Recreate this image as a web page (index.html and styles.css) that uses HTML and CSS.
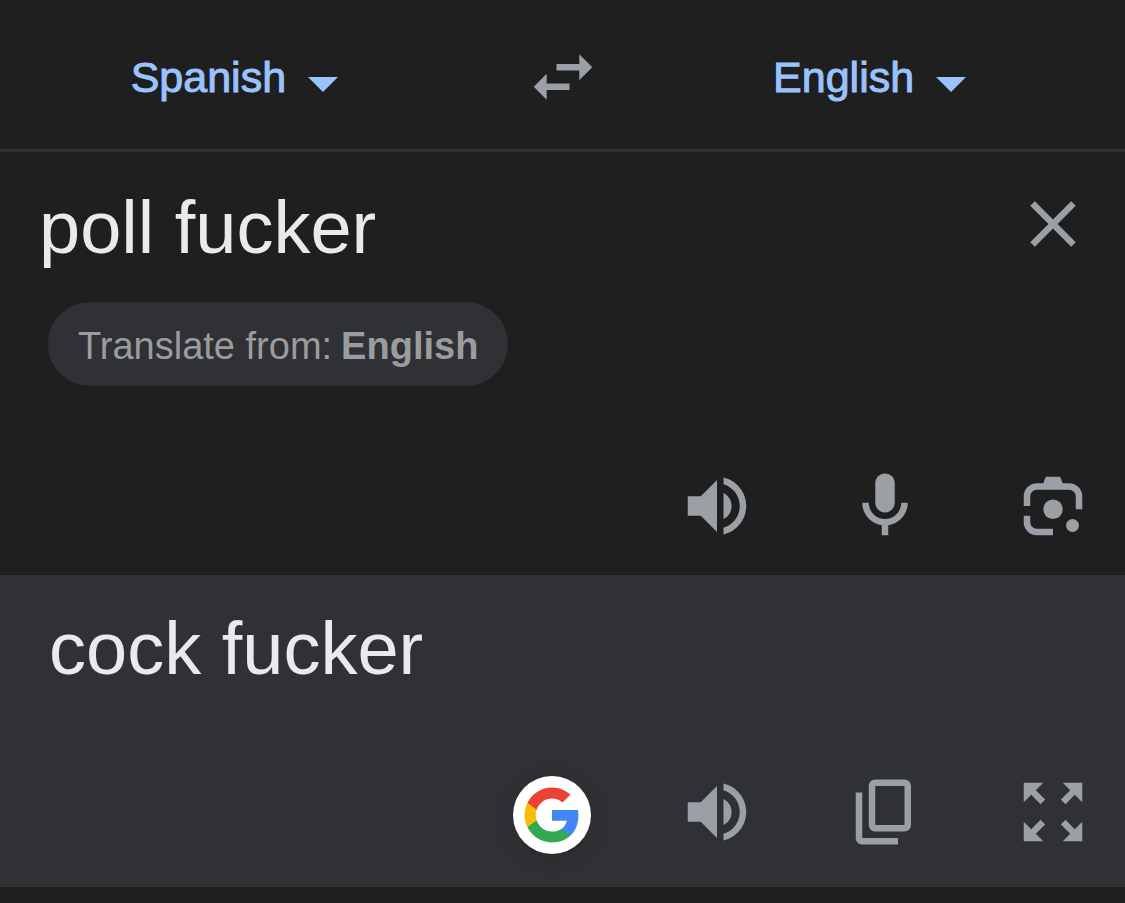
FILE: index.html
```html
<!DOCTYPE html>
<html lang="en">
<head>
    <meta charset="UTF-8">
    <meta name="viewport" content="width=device-width, initial-scale=1">
    <title>Translate</title>
    <link rel="stylesheet" href="styles.css">
</head>
<body>
    <header class="languages">
        <button class="language" type="button">
            Spanish
            <svg class="caret" viewBox="0 0 30 30" aria-hidden="true"><path d="M0 15h30L15 30z"/></svg>
        </button>
        <button class="icon-button" type="button" aria-label="Swap languages">
            <svg class="icon" viewBox="0 0 24 24"><path d="M6.99 11L3 15l3.99 4v-3H14v-2H6.99v-3zM21 9l-3.99-4v3H10v2h7.01v3L21 9z"/></svg>
        </button>
        <button class="language language-target" type="button">
            English
            <svg class="caret" viewBox="0 0 30 30" aria-hidden="true"><path d="M0 15h30L15 30z"/></svg>
        </button>
    </header>

    <main>
        <section class="source">
            <div class="source-row">
                <textarea class="source-text" rows="1" aria-label="Source text" spellcheck="false">poll fucker</textarea>
                <button class="icon-button" type="button" aria-label="Clear text">
                    <svg class="icon" viewBox="0 0 24 24"><path d="M19 6.41L17.59 5 12 10.59 6.41 5 5 6.41 10.59 12 5 17.59 6.41 19 12 13.41 17.59 19 19 17.59 13.41 12z"/></svg>
                </button>
            </div>
            <button class="suggestion" type="button"><span>Translate from:</span><strong>English</strong></button>
            <div class="tools">
                <button class="icon-button" type="button" aria-label="Listen">
                    <svg class="icon" viewBox="0 0 24 24"><path d="M3 9v6h4l5 5V4L7 9H3zm13.5 3c0-1.77-1-3.29-2.5-4.03v8.05c1.5-.73 2.5-2.25 2.5-4.02zM14 3.23v2.06c2.89.86 5 3.54 5 6.71s-2.11 5.85-5 6.71v2.06c4.01-.91 7-4.49 7-8.77s-2.99-7.86-7-8.77z"/></svg>
                </button>
                <button class="icon-button" type="button" aria-label="Speak">
                    <svg class="icon" viewBox="0 0 24 24"><path d="M12 14c1.66 0 3-1.34 3-3V5c0-1.66-1.34-3-3-3S9 3.34 9 5v6c0 1.66 1.34 3 3 3z"/><path d="M17 11c0 2.76-2.24 5-5 5s-5-2.24-5-5H5c0 3.53 2.61 6.43 6 6.92V21h2v-3.08c3.39-.49 6-3.39 6-6.92h-2z"/></svg>
                </button>
                <button class="icon-button" type="button" aria-label="Search with camera">
                    <svg class="icon" viewBox="0 0 24 24">
                        <path d="M3 12V9a4 4 0 0 1 4-4h2l.8-2h4.4l.8 2h2a4 4 0 0 1 4 4v4h-2V9a2 2 0 0 0-2-2H7a2 2 0 0 0-2 2v3zM3 15h2v2a2 2 0 0 0 2 2h5v2H7a4 4 0 0 1-4-4z"/>
                        <circle cx="12" cy="13" r="3"/>
                        <circle cx="18" cy="18" r="2"/>
                    </svg>
                </button>
            </div>
        </section>

        <section class="result">
            <p class="result-text">cock fucker</p>
            <div class="tools">
                <a class="google" href="#" aria-label="Search on Google">
                    <svg class="google-logo" viewBox="0 0 24 24">
                        <path fill="#4285f4" d="M22.56 12.25c0-.78-.07-1.53-.2-2.25H12v4.26h5.92c-.26 1.37-1.04 2.53-2.21 3.31v2.77h3.57c2.08-1.92 3.28-4.74 3.28-8.09z"/>
                        <path fill="#34a853" d="M12 23c2.97 0 5.46-.98 7.28-2.66l-3.57-2.77c-.98.66-2.23 1.06-3.71 1.06-2.86 0-5.29-1.93-6.16-4.53H2.18v2.84C3.99 20.53 7.7 23 12 23z"/>
                        <path fill="#fbbc05" d="M5.84 14.09c-.22-.66-.35-1.36-.35-2.09s.13-1.43.35-2.09V7.07H2.18C1.43 8.55 1 10.22 1 12s.43 3.45 1.18 4.93l2.85-2.22.81-.62z"/>
                        <path fill="#ea4335" d="M12 5.38c1.62 0 3.06.56 4.21 1.64l3.15-3.15C17.45 2.09 14.97 1 12 1 7.7 1 3.99 3.47 2.18 7.07l3.66 2.84c.87-2.6 3.3-4.53 6.16-4.53z"/>
                    </svg>
                </a>
                <button class="icon-button" type="button" aria-label="Listen to translation">
                    <svg class="icon" viewBox="0 0 24 24"><path d="M3 9v6h4l5 5V4L7 9H3zm13.5 3c0-1.77-1-3.29-2.5-4.03v8.05c1.5-.73 2.5-2.25 2.5-4.02zM14 3.23v2.06c2.89.86 5 3.54 5 6.71s-2.11 5.85-5 6.71v2.06c4.01-.91 7-4.49 7-8.77s-2.99-7.86-7-8.77z"/></svg>
                </button>
                <button class="icon-button" type="button" aria-label="Copy translation">
                    <svg class="icon" viewBox="0 0 24 24"><path d="M18 2H9c-1.1 0-2 .9-2 2v12c0 1.1.9 2 2 2h9c1.1 0 2-.9 2-2V4c0-1.1-.9-2-2-2zm0 14H9V4h9v12zM5 6H3v14c0 1.1.9 2 2 2h11v-2H5V6z"/></svg>
                </button>
                <button class="icon-button" type="button" aria-label="Full screen">
                    <svg class="icon" viewBox="0 0 24 24"><path d="M15 3l2.3 2.3-2.89 2.87 1.42 1.42L18.7 6.7 21 9V3h-6zM3 9l2.3-2.3 2.87 2.89 1.42-1.42L6.7 5.3 9 3H3v6zm6 12l-2.3-2.3 2.89-2.87-1.42-1.42L5.3 17.3 3 15v6h6zm12-6l-2.3 2.3-2.87-2.89-1.42 1.42 2.89 2.87L15 21h6v-6z"/></svg>
                </button>
            </div>
        </section>
    </main>
</body>
</html>
```
FILE: styles.css
```css
* {
    box-sizing: border-box;
}

body {
    margin: 0;
    background-color: #1f1f1f;
    color: #e8eaed;
    font-family: "Liberation Sans", Arial, sans-serif;
}

button {
    padding: 0;
    border: none;
    background: none;
    font-family: inherit;
    cursor: pointer;
}

.icon-button {
    flex: none;
    color: #9aa0a6;
}

.icon {
    display: block;
    width: 78px;
    height: 78px;
    fill: currentColor;
}

/* language bar */
.languages {
    display: grid;
    grid-template-columns: 5fr 2fr 5fr;
    align-items: center;
    justify-items: center;
    height: 152px;
    padding-top: 5px;
    border-bottom: 3px solid #303030;
}

.language {
    display: flex;
    align-items: center;
    gap: 22px;
    color: #99c3ff;
    font-size: 43px;
    -webkit-text-stroke: 1px #99c3ff;
}

.language-target {
    margin-right: 42px;
}

.caret {
    width: 30px;
    height: 30px;
    fill: currentColor;
    stroke: none;
}

/* source text */
.source {
    padding: 33px 33px 30px 39px;
}

.source-row {
    display: flex;
    align-items: flex-start;
}

.source-text,
.result-text {
    margin: 0;
    font-size: 74px;
    line-height: 86px;
}

.source-text {
    flex: 1;
    min-width: 0;
    height: 86px;
    padding: 0;
    border: none;
    outline: none;
    resize: none;
    overflow: hidden;
    background: none;
    color: inherit;
    font-family: inherit;
}

.suggestion {
    display: flex;
    align-items: center;
    gap: 9px;
    height: 84px;
    margin: 31px 0 0 9px;
    padding: 4px 30px 0;
    border-radius: 42px;
    background-color: #303134;
    color: #9b9c9e;
    font-size: 38px;
}

.tools {
    position: relative;
    display: flex;
    gap: 90px;
    width: max-content;
    margin: 81px 0 0 auto;
}

/* translation */
.result {
    padding: 31px 33px 36px 49px;
    background-color: #303134;
}

/* round button floating beside the tools */
.google {
    position: absolute;
    top: 3px;
    right: calc(100% + 87px);
    display: grid;
    place-items: center;
    width: 78px;
    height: 78px;
    border-radius: 50%;
    background-color: #fff;
    box-shadow: 0 4px 20px rgba(0, 0, 0, 0.15);
}

.google-logo {
    width: 60px;
    height: 60px;
}
```
